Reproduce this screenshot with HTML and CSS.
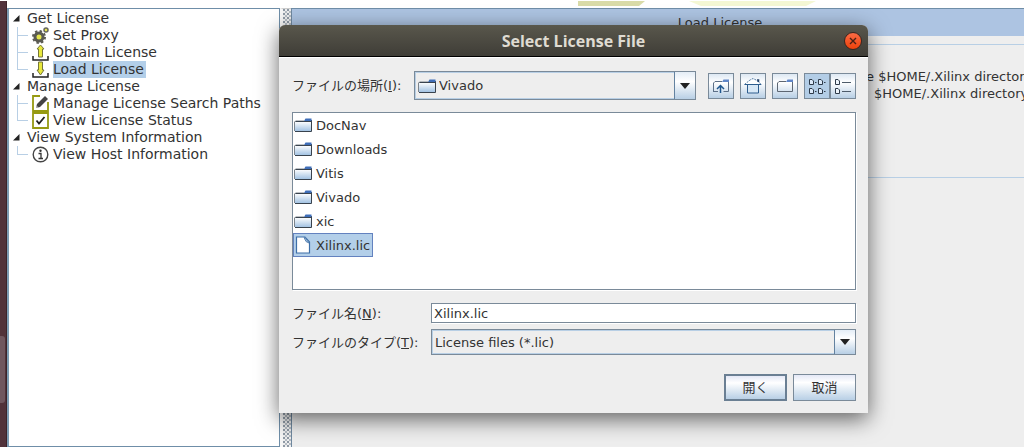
FILE: index.html
```html
<!DOCTYPE html>
<html lang="ja">
<head>
<meta charset="utf-8">
<title>Select License File</title>
<link rel="stylesheet" href="styles.css">
</head>
<body>
<svg class="defs" aria-hidden="true">
  <defs>
    <linearGradient id="blue" x1="0" y1="0" x2="0" y2="1">
      <stop offset="0" stop-color="#fff"/><stop offset="1" stop-color="#a3c3e3"/>
    </linearGradient>
    <symbol id="folder" viewBox="0 0 18 14">
      <path d="M1 3.5H17V13H1z" fill="url(#blue)"/>
      <path d="M.5 13V4L1.5 3H10" fill="none" stroke="#7c848c"/>
      <path d="M1.5 3.5H17M17.5 2V13.5H1" fill="none" stroke="#39434e"/>
      <path d="M10 3L11.5.5H17.5V3z" fill="#3f6eb8"/>
    </symbol>
    <symbol id="arrow" viewBox="0 0 10 6"><path d="M0 0H10L5 6z" fill="#222"/></symbol>
    <symbol id="twisty" viewBox="0 0 7 7"><path d="M6.500 0V6.500H0z" fill="#222"/></symbol>
  </defs>
</svg>
<div class="desktop">
  <div class="launcher"><span class="launcher-item"></span></div>
  <div class="app">
    <div class="banner">
      <svg class="banner-art" width="238" height="6" viewBox="0 0 238 6" aria-hidden="true">
        <path d="M0 1H67L61 6H0z" fill="#d9dba8"/><path d="M111 1H238L228 6H123z" fill="#f4f7d4"/>
      </svg>
    </div>
    <div class="workspace">
      <nav class="tree">
        <ul>
          <li><div class="node"><svg class="twisty"><use href="#twisty"/></svg>Get License</div>
            <ul class="branch">
              <li class="leaf"><svg class="icon" viewBox="0 0 17 17"><circle cx="7" cy="10" r="4" fill="#e5e54c" stroke="#5a5a52" stroke-width="3"/><circle cx="7" cy="10" r="6" fill="none" stroke="#5a5a52" stroke-width="2" stroke-dasharray="2.400 2.300"/><circle cx="14" cy="3" r="2" fill="#e5e54c" stroke="#66665c" stroke-width="1.500"/></svg><a href="#proxy">Set Proxy</a></li>
              <li class="leaf"><svg class="icon" viewBox="0 0 17 17"><path d="M1 12V16H16V12" fill="none" stroke="#222" stroke-width="1.500"/><path d="M8.500 1L12 5H10.500V13H6.500V5H5z" fill="#e8e83c" stroke="#77773a"/></svg><a href="#obtain">Obtain License</a></li>
              <li class="leaf"><svg class="icon" viewBox="0 0 17 17"><path d="M1 12V16H16V12" fill="none" stroke="#222" stroke-width="1.500"/><path d="M8.500 14L12 9H10.500V1H6.500V9H5z" fill="#e8e83c" stroke="#77773a"/></svg><a class="selected" href="#load">Load License</a></li>
            </ul>
          </li>
          <li><div class="node"><svg class="twisty"><use href="#twisty"/></svg>Manage License</div>
            <ul class="branch">
              <li class="leaf"><svg class="icon" viewBox="0 0 17 17"><path d="M8 1H1V16H16V7" fill="#fff" stroke="#969a12" stroke-width="1.800"/><path d="M4 13L5 9L13 1L16 4L8 12z" fill="#444"/><path d="M4 13L4.500 10.500L6.500 12.400z" fill="#bbb"/></svg><a href="#paths">Manage License Search Paths</a></li>
              <li class="leaf"><svg class="icon" viewBox="0 0 17 17"><path d="M1 1H16V16H1z" fill="#fff" stroke="#969a12" stroke-width="1.800"/><path d="M4.500 8.500L7 11.500L12.500 5" fill="none" stroke="#222" stroke-width="1.800"/></svg><a href="#status">View License Status</a></li>
            </ul>
          </li>
          <li><div class="node"><svg class="twisty"><use href="#twisty"/></svg>View System Information</div>
            <ul class="branch">
              <li class="leaf"><svg class="icon" viewBox="0 0 17 17"><circle cx="8.500" cy="8.500" r="7.300" fill="#fff" stroke="#444" stroke-width="1.400"/><circle cx="8.500" cy="4.700" r="1.200" fill="#333"/><path d="M6.500 7.500H9V12.500M6.500 12.500H11" fill="none" stroke="#333" stroke-width="1.300"/></svg><a href="#host">View Host Information</a></li>
            </ul>
          </li>
        </ul>
      </nav>
      <div class="splitter"></div>
      <main class="panel">
        <h1 class="panel-title">Load License</h1>
        <section class="panel-body">
          <p class="hint first">e $HOME/.Xilinx directory</p>
          <p class="hint">$HOME/.Xilinx directory</p>
        </section>
      </main>
    </div>
  </div>
</div>

<div class="dialog" role="dialog" aria-labelledby="dialog-title">
  <header class="titlebar">
    <h2 id="dialog-title">Select License File</h2>
    <button class="close" type="button" aria-label="Close"><svg width="8" height="8" viewBox="0 0 8 8"><path d="M1 1L7 7M7 1L1 7" stroke="#4a2015" stroke-width="1.400"/></svg></button>
  </header>
  <form class="content">
    <div class="toolbar">
      <label for="place">ファイルの場所(<u>I</u>):</label>
      <div class="combo place">
        <svg class="folder"><use href="#folder"/></svg>
        <select id="place"><option>Vivado</option></select>
        <span class="drop"><svg width="10" height="6"><use href="#arrow"/></svg></span>
      </div>
      <div class="tools">
        <button class="tool" type="button" aria-label="Up one level"><svg width="18" height="16" viewBox="0 0 18 16"><path d="M1.500 14V5L3 3.500H10M16.500 3V13.500H11.500M1.500 13.500H6" fill="none" stroke="#5d7088"/><path d="M10 4L11.500 1.500H17V4z" fill="#5f86c8"/><path d="M8.500 15V8M5 11L8.500 7.500L12 11" fill="none" stroke="#1e568f" stroke-width="1.500"/></svg></button>
        <button class="tool" type="button" aria-label="Home"><svg width="18" height="16" viewBox="0 0 18 16"><path d="M.5 6.500L6 2L9 .5L12 2L17.500 6.500z" fill="#fff" stroke="#527ca6" stroke-dasharray="2 1"/><path d="M3.500 7V15H14.500V7M1 6.500H17" fill="#d8e8f6" stroke="#2d5d8e"/><path d="M13 2H14.500V4" fill="none" stroke="#24436b" stroke-width="1.500"/></svg></button>
        <button class="tool" type="button" aria-label="New folder"><svg width="18" height="16" viewBox="0 0 18 16"><path d="M1.500 13.500V5L3 3.500H10M16.500 3V13.500H1.500" fill="none" stroke="#5d6672"/><path d="M10 4L11.500 1.500H17V4z" fill="#5f86c8"/></svg></button>
        <div class="views">
          <button class="tool active" type="button" aria-label="List view"><svg width="18" height="18" viewBox="0 0 18 18"><g fill="#dceafa" stroke="#2e3b4a"><path d="M1.500 2.500H4L5.500 4V7.500H1.500z"/><path d="M10.500 2.500H13L14.500 4V7.500H10.500z"/><path d="M1.500 11.500H4L5.500 13V16.500H1.500z"/><path d="M10.500 11.500H13L14.500 13V16.500H10.500z"/></g><path d="M7 5.500H8.500M16 5.500H17.500M7 14.500H8.500M16 14.500H17.500" stroke="#2e3b4a"/></svg></button>
          <button class="tool" type="button" aria-label="Details view"><svg width="18" height="18" viewBox="0 0 18 18"><g fill="#eef5fc" stroke="#2e3b4a"><path d="M1.500 2.500H4L5.500 4V7.500H1.500z"/><path d="M1.500 11.500H4L5.500 13V16.500H1.500z"/></g><path d="M8 5.500H17M8 14.500H17" stroke="#4d5b6a"/></svg></button>
        </div>
      </div>
    </div>
    <ul class="files">
      <li><svg class="folder"><use href="#folder"/></svg>DocNav</li>
      <li><svg class="folder"><use href="#folder"/></svg>Downloads</li>
      <li><svg class="folder"><use href="#folder"/></svg>Vitis</li>
      <li><svg class="folder"><use href="#folder"/></svg>Vivado</li>
      <li><svg class="folder"><use href="#folder"/></svg>xic</li>
      <li class="chosen"><svg class="folder sheet" viewBox="0 0 18 18"><path d="M2.500 1H11L15.500 6V17H2.500z" fill="#fff" stroke="#3d6fa8" stroke-width="1.200"/><path d="M10 1.500L12 5.500L15 7L11 1.500z" fill="#b8cde6" stroke="#5c86b5"/></svg>Xilinx.lic</li>
    </ul>
    <div class="fields">
      <label for="name">ファイル名(<u>N</u>):</label>
      <input id="name" type="text" value="Xilinx.lic">
      <label for="type">ファイルのタイプ(<u>T</u>):</label>
      <div class="combo type">
        <select id="type"><option>License files (*.lic)</option></select>
        <span class="drop"><svg width="10" height="6"><use href="#arrow"/></svg></span>
      </div>
    </div>
    <div class="actions">
      <button class="action default" type="button">開く</button>
      <button class="action" type="button">取消</button>
    </div>
  </form>
</div>
</body>
</html>
```

FILE: styles.css
```css
* { box-sizing: border-box; }
body {
  margin: 0;
  overflow: hidden;
  background: #fff;
  color: #333;
  font: 13px/17px "DejaVu Sans", "Noto Sans CJK JP", sans-serif;
}
ul, h1, h2, p { margin: 0; padding: 0; list-style: none; font-weight: normal; }
button, input, select { font: inherit; color: inherit; margin: 0; }
svg { display: block; flex: none; }
.defs { position: absolute; width: 0; height: 0; }

.desktop { display: flex; height: 100vh; }
.launcher {
  flex: none;
  display: flex;
  align-items: flex-end;
  width: 7px;
  margin-top: 1px;
  padding-bottom: 44px;
  background: #51323a;
  border-right: 1px solid #3d2329;
}
.launcher-item { width: 5px; height: 67px; background: #70575f; border-radius: 0 3px 3px 0; }
.app { flex: 1; min-width: 0; display: flex; flex-direction: column; }
.banner { height: 8px; padding-left: 571px; }
.workspace { flex: 1; display: flex; min-height: 0; }

.tree {
  flex: none;
  width: 273px;
  padding: 1px 0 0 4px;
  background: #fff;
  border: 1px solid #6f8ea8;
  border-left: 2px solid #7d9bb2;
  font-size: 14px;
}
.node { display: flex; align-items: center; height: 17px; gap: 7px; }
.twisty { width: 7px; height: 7px; }
.branch { margin-left: 4px; }
.leaf {
  display: flex;
  align-items: center;
  height: 17px;
  background:
    linear-gradient(#b8cfe5, #b8cfe5) 0 0 / 1px 100% no-repeat,
    linear-gradient(#b8cfe5, #b8cfe5) 0 8px / 11px 1px no-repeat;
}
.leaf:last-child {
  background:
    linear-gradient(#b8cfe5, #b8cfe5) 0 0 / 1px 9px no-repeat,
    linear-gradient(#b8cfe5, #b8cfe5) 0 8px / 11px 1px no-repeat;
}
.icon { width: 17px; height: 17px; margin: 0 4px 0 15px; }
.leaf a { height: 17px; padding: 0 2px 0 0; color: inherit; text-decoration: none; white-space: nowrap; }
.leaf .selected { background: #b3cfe9; }

.splitter {
  flex: none;
  width: 11px;
  border-top: 1px solid #ccc;
  border-left: 3px solid #f6f6f6;
  background:
    conic-gradient(#8f9aa6 25%, transparent 0) 2px 0 / 4px 4px,
    conic-gradient(#b4bcc4 25%, transparent 0) 0 2px / 4px 4px,
    #eee;
}
.panel {
  flex: 1;
  min-width: 0;
  overflow: hidden;
  background: #eee;
  border-top: 1px solid #6f8ea8;
  border-left: 1px solid #7089a0;
}
.panel-title { height: 27px; padding: 5px 0 5px 124px; background: #adc4e2; font-size: 13px; line-height: 17px; text-align: center; }
.panel-body {
  height: 134px;
  margin-top: 8px;
  padding: 23px 0 0 582px;
  border-top: 1px solid #b8cfe5;
  border-bottom: 1px solid #b8cfe5;
}
.hint { white-space: nowrap; }
.hint.first { margin-left: -8px; }

.dialog {
  position: absolute;
  top: 25px;
  left: 279px;
  width: 589px;
  background: #eee;
  border-radius: 6px 6px 0 0;
  box-shadow: 0 6px 22px rgba(0, 0, 0, .6);
}
.titlebar {
  display: flex;
  align-items: center;
  height: 32px;
  padding: 0 6px 0 24px;
  background: linear-gradient(#59574c, #3f3d37);
  border-bottom: 1px solid #000;
  border-radius: 6px 6px 0 0;
}
.titlebar h2 { flex: 1; color: #dfdbd2; font: bold 16px/20px "Open Sans", "Noto Sans", sans-serif; text-align: center; }
.close {
  display: flex;
  align-items: center;
  justify-content: center;
  width: 18px;
  height: 18px;
  padding: 0;
  border: 1px solid #3a2620;
  border-radius: 50%;
  background: linear-gradient(#fa6b45, #ee420b);
}
.content { padding: 13px 12px 12px 13px; border-top: 1px solid #fff; }
.toolbar { display: flex; align-items: center; }
.toolbar label { width: 122px; white-space: nowrap; }
.combo { display: flex; align-items: center; border: 1px solid #7a8a99; box-shadow: inset 0 0 0 1px #b8cfe5; }
.combo.place { flex: 1; height: 29px; padding-left: 3px; margin-right: 12px; }
.combo.type { height: 26px; }
.combo select { flex: 1; min-width: 0; padding: 0 0 0 3px; border: 0; outline: 0; background: transparent; appearance: none; }
.drop {
  display: flex;
  align-items: center;
  justify-content: center;
  align-self: stretch;
  width: 21px;
  border-left: 1px solid #6382a0;
  background: linear-gradient(#e4edf6, #fff 35%, #b8cfe5);
  pointer-events: none;
}
.folder { width: 18px; height: 14px; }
.tools { display: flex; gap: 6px; }
.views { display: flex; }
.tool {
  display: flex;
  align-items: center;
  justify-content: center;
  width: 26px;
  height: 26px;
  padding: 0;
  border: 1px solid #7a8a99;
  background: linear-gradient(#dde8f3, #fff 35%, #b8cfe5);
}
.tool.active { background: #b3cde6; }
.files {
  height: 178px;
  margin-top: 12px;
  background: #fff;
  border: 1px solid #7a8a99;
  box-shadow: 1px 1px #fff;
}
.files li { display: flex; align-items: center; gap: 4px; width: fit-content; height: 24px; padding: 0 5px 0 1px; }
.files .chosen { padding: 0 2px 0 0; background: #b3cfe9; border: 1px solid #6382bf; }
.folder.sheet { height: 18px; }
.fields {
  display: grid;
  grid-template-columns: 139px 1fr;
  align-items: center;
  row-gap: 6px;
  margin-top: 13px;
}
.fields input { width: 100%; height: 20px; padding: 0 2px; border: 1px solid #7a8a99; border-radius: 0; outline: 0; background: #fff; box-shadow: 1px 1px #fff; }
.actions { display: flex; justify-content: flex-end; gap: 6px; margin-top: 19px; }
.action {
  width: 63px;
  height: 27px;
  padding: 0;
  border: 1px solid #7a8a99;
  background: linear-gradient(#e4e8f6, #fff 30%, #b8cfe5);
}
.action.default { border: 2px solid #6a7f93; }
```
